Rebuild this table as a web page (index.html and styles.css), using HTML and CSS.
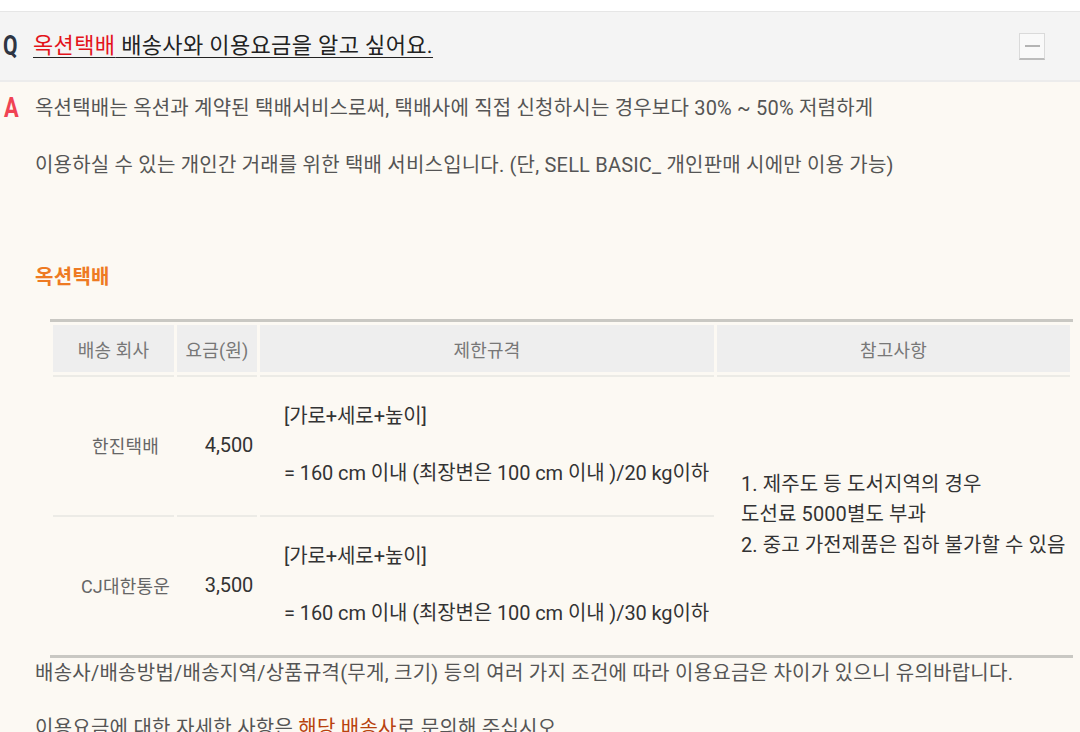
FILE: index.html
```html
<!DOCTYPE html>
<html lang="ko">
<head>
<meta charset="utf-8">
<title>FAQ</title>
<link rel="stylesheet" href="styles.css">
</head>
<body>
<div class="page">
  <div class="q-row">
    <span class="q-mark">Q</span>
    <a class="q-text" href="#"><span class="red">옥션택배</span> 배송사와 이용요금을 알고 싶어요.</a>
    <span class="toggle"><span class="minus"></span></span>
  </div>
  <div class="answer">
    <span class="a-mark">A</span>
    <div class="a-body">
      <p class="line first">옥션택배는 옥션과 계약된 택배서비스로써, 택배사에 직접 신청하시는 경우보다 30% ~ 50% 저렴하게</p>
      <p class="line">이용하실 수 있는 개인간 거래를 위한 택배 서비스입니다. (단, SELL BASIC_ 개인판매 시에만 이용 가능)</p>
      <h3 class="sub-title">옥션택배</h3>
      <table class="fee-table">
        <colgroup>
          <col class="c1"><col class="c2"><col class="c3"><col class="c4">
        </colgroup>
        <thead>
          <tr><th>배송 회사</th><th>요금(원)</th><th>제한규격</th><th>참고사항</th></tr>
        </thead>
        <tbody>
          <tr>
            <td class="company">한진택배</td>
            <td class="price">4,500</td>
            <td class="spec"><div>[가로+세로+높이]</div><div class="spec-2">= 160 cm 이내 (최장변은 100 cm 이내 )/20 kg이하</div></td>
            <td class="note" rowspan="2"><div>1. 제주도 등 도서지역의 경우</div><div>도선료 5000별도 부과</div><div>2. 중고 가전제품은 집하 불가할 수 있음</div></td>
          </tr>
          <tr>
            <td class="company">CJ대한통운</td>
            <td class="price">3,500</td>
            <td class="spec"><div>[가로+세로+높이]</div><div class="spec-2">= 160 cm 이내 (최장변은 100 cm 이내 )/30 kg이하</div></td>
          </tr>
        </tbody>
      </table>
      <p class="tail">배송사/배송방법/배송지역/상품규격(무게, 크기) 등의 여러 가지 조건에 따라 이용요금은 차이가 있으니 유의바랍니다.</p>
      <p class="tail second">이용요금에 대한 자세한 사항은 <a class="link" href="#">해당 배송사</a>로 문의해 주십시오.</p>
    </div>
  </div>
</div>
</body>
</html>
```

FILE: styles.css
```css
* { box-sizing: border-box; }
html, body { margin: 0; padding: 0; background: #ffffff; }
body {
  font-family: Roboto, "Noto Sans CJK KR", sans-serif;
  color: #555;
  overflow: hidden;
}
.page { padding-top: 11px; }

.q-row {
  display: flex;
  align-items: center;
  height: 71px;
  background: #f4f4f4;
  border-top: 1px solid #e6e6e6;
  border-bottom: 2px solid #ececec;
}
.q-mark {
  width: 33px;
  padding-left: 4px;
  flex: none;
  font-family: Roboto, sans-serif;
  font-weight: 700;
  font-size: 28px;
  line-height: 28px;
  color: #2e3543;
  transform: scaleX(0.75);
  transform-origin: left center;
}
.q-text {
  font-size: 22px;
  letter-spacing: 0.35px;
  color: #222;
  text-decoration: underline;
  text-decoration-thickness: 1px;
  text-underline-offset: 4px;
  line-height: 30px;
}
.q-text .red { color: #e3131b; }
.toggle {
  margin-left: auto;
  margin-right: 35px;
  width: 26px;
  height: 27px;
  background: #f9f9f9;
  border: 1px solid #dadada;
  border-bottom: 2px solid #bcbcbc;
  display: flex;
  align-items: center;
  justify-content: center;
}
.minus { width: 15px; height: 2px; background: #b4b4b4; }

.answer {
  display: flex;
  background: #fcf9f3;
  min-height: 700px;
}
.a-mark {
  width: 35px;
  padding-left: 5px;
  font-family: Roboto, sans-serif;
  font-weight: 700;
  font-size: 28px;
  line-height: 52px;
  color: #f04353;
  transform: scaleX(0.78);
  transform-origin: left center;
  flex: none;
}
.a-body { flex: 1; }
.line {
  margin: 0;
  font-size: 20px;
  letter-spacing: 0.2px;
  line-height: 52px;
  color: #555;
}
.line.first { margin-bottom: 5px; }
.sub-title {
  margin: 71px 0 0;
  font-size: 20px;
  font-weight: 700;
  letter-spacing: 0.3px;
  line-height: 30px;
  color: #ee7a22;
}

.fee-table {
  margin: 27px 0 0 15px;
  width: 1023px;
  border-collapse: separate;
  border-spacing: 3px;
  border-top: 3px solid #c9c8c3;
  border-bottom: 3px solid #c9c8c3;
  table-layout: fixed;
}
.c1 { width: 121px; }
.c2 { width: 80px; }
.c3 { width: 454px; }
.c4 { width: 353px; }
.fee-table th {
  height: 47px;
  padding: 0;
  background: #eeeeee;
  font-weight: 400;
  font-size: 18px;
  letter-spacing: 0.2px;
  color: #777;
  text-align: center;
}
.fee-table td {
  border-top: 2px solid #ecebe6;
  padding: 0 0 0 24px;
  vertical-align: middle;
  color: #333;
  font-size: 20px;
  letter-spacing: -0.1px;
  white-space: nowrap;
}
.fee-table td.company {
  text-align: center;
  font-size: 18px;
  letter-spacing: 0.2px;
  color: #666;
}
.fee-table td.price { text-align: center; }
.fee-table td.spec { padding-top: 24px; padding-bottom: 24px; line-height: 30px; }
.spec-2 { margin-top: 27px; }
.fee-table td.note { line-height: 30.5px; letter-spacing: 0.1px; }

.tail {
  margin: 0;
  font-size: 20px;
  letter-spacing: 0.25px;
  line-height: 30px;
  color: #555;
}
.tail.second { margin-top: 25px; }
.link { color: #b8420e; text-decoration: underline; }
```
